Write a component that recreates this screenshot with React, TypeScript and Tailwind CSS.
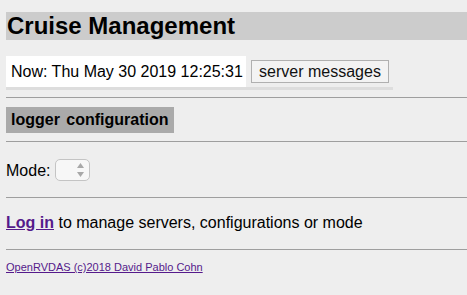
import React from "react";

const SelectArrows = () => (
  <svg width="7" height="14" viewBox="0 0 7 14" className="block">
    <path d="M3.5 0 L7 5 L0 5 Z" fill="#a8a8a8" />
    <path d="M3.5 14 L7 9 L0 9 Z" fill="#a8a8a8" />
  </svg>
);

export default function App() {
  return (
    <div className="min-h-screen bg-[#eeeeee] pl-[6px] pt-[12px] font-['Liberation_Sans',Arial,sans-serif] text-[16px] text-black">
      {/* Title */}
      <h1 className="h-[28px] bg-[#cccccc] pl-px text-[24px] font-bold leading-[28px]">
        Cruise Management
      </h1>

      {/* Clock + server messages */}
      <div className="mt-[16px] flex w-[387px] items-start border-b-[3px] border-[#dddddd]">
        <div className="h-[31px] w-[240px] bg-white pl-[5px] leading-[31px]">
          Now: Thu May 30 2019 12:25:31
        </div>
        <button className="ml-[5px] mt-[4px] h-[23px] w-[138px] border border-[#b0b0b0] bg-[#f3f3f3] text-center leading-[21px] text-[#111]">
          server messages
        </button>
      </div>

      <hr className="mt-[7px] border-t border-[#9e9e9e]" />

      {/* Tabs */}
      <div className="mt-[9px] h-[26px] w-[168px] bg-[#aaaaaa] pl-[5px] font-bold leading-[26px]">
        logger <span className="ml-[2px]">configuration</span>
      </div>

      <hr className="mt-[8px] border-t border-[#9e9e9e]" />

      {/* Mode */}
      <div className="mt-[17px] flex h-[22px] items-start">
        <span className="leading-[24px]">Mode:</span>
        <div className="ml-[4.5px] flex h-[22px] w-[35px] items-center justify-end rounded-[5px] border border-[#c4c4c4] bg-[#f7f7f7] pr-[5px]">
          <SelectArrows />
        </div>
      </div>

      <hr className="mt-[16px] border-t border-[#9e9e9e]" />

      {/* Login */}
      <p className="mt-[16px] leading-[18px]">
        <a href="#" className="font-bold text-[#551a8b] underline">
          Log in
        </a>{" "}
        to manage servers, configurations or mode
      </p>

      <hr className="mt-[17px] border-t border-[#9e9e9e]" />

      {/* Footer */}
      <p className="mt-[11px] text-[11px] leading-[13px]">
        <a href="#" className="text-[#551a8b] underline">
          OpenRVDAS (c)2018 David Pablo Cohn
        </a>
      </p>
    </div>
  );
}
